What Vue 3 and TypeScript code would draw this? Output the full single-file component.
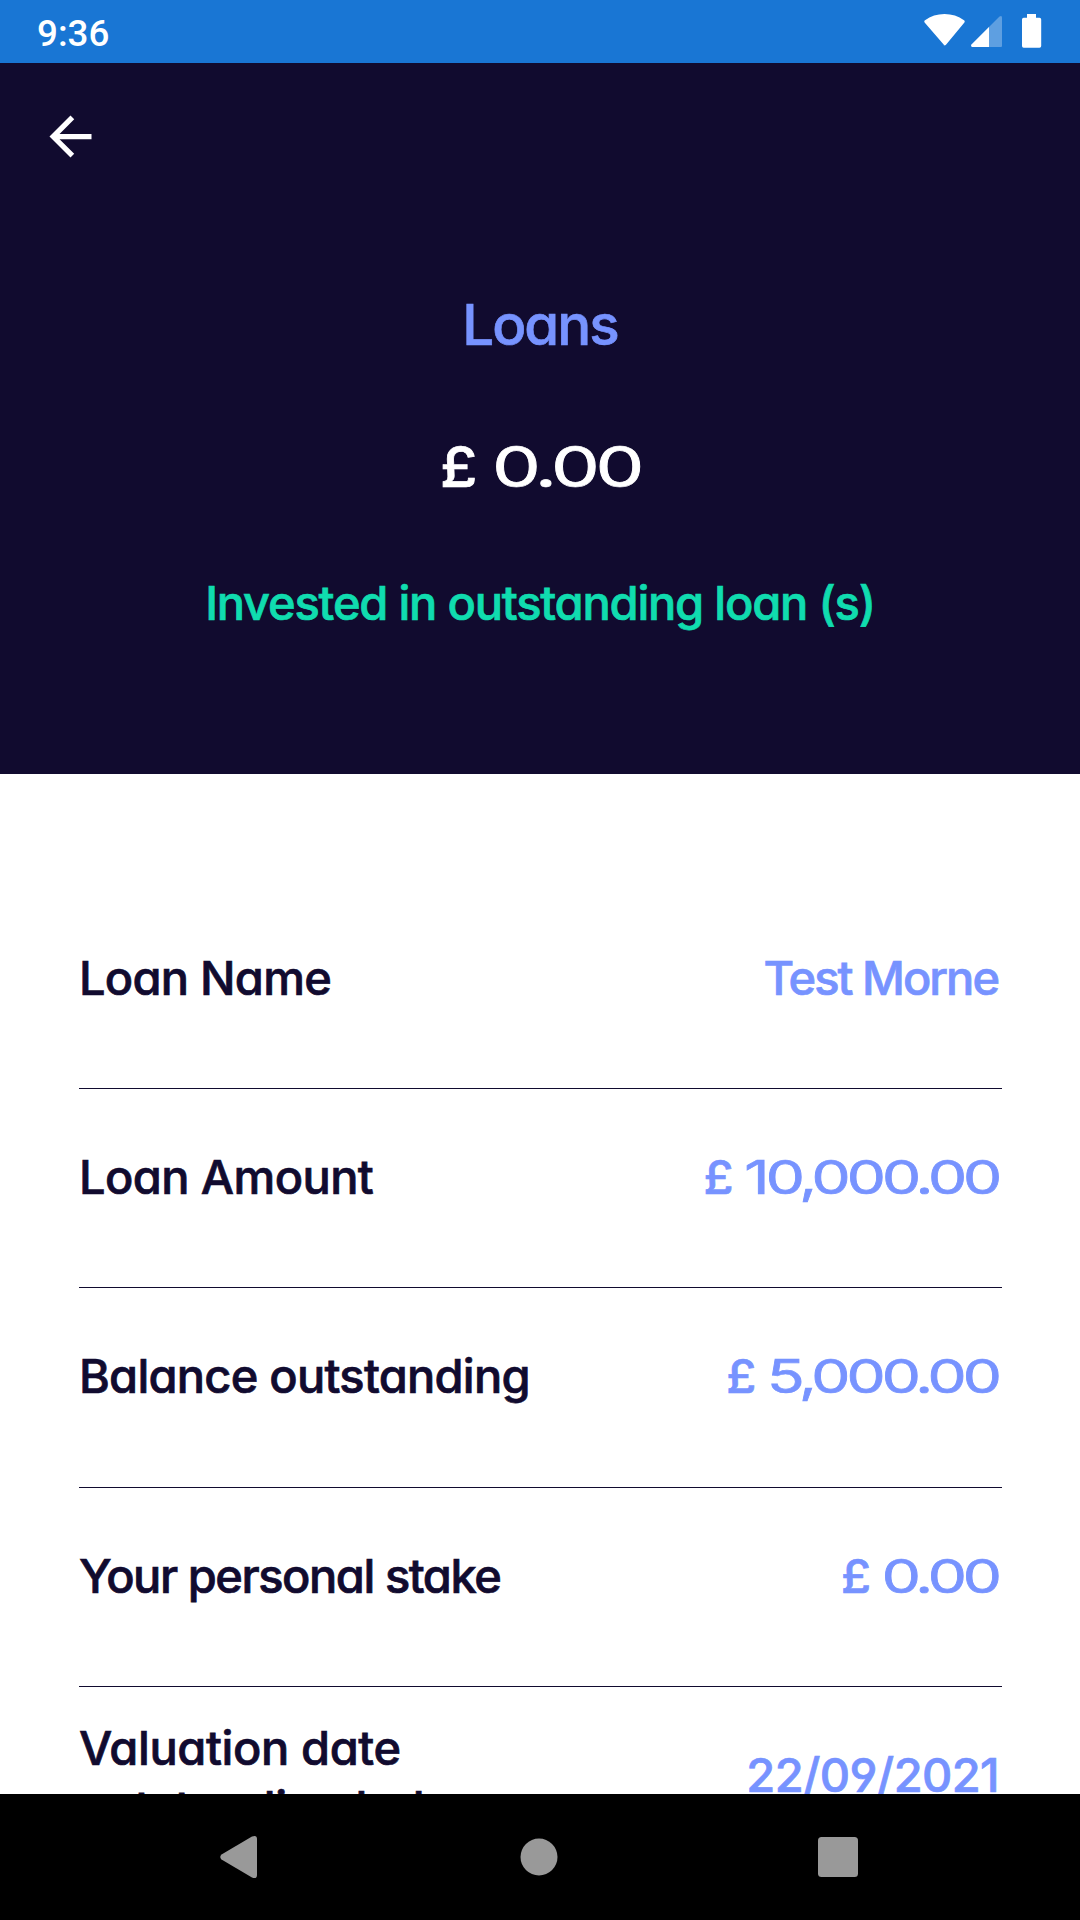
<script setup lang="ts">
interface LoanRow {
  label: string
  value: string
  labelSpacing: number
  kind: 'text' | 'money' | 'date'
}

const rows: LoanRow[] = [
  { label: 'Loan Name', value: 'Test Morne', labelSpacing: -0.75, kind: 'text' },
  { label: 'Loan Amount', value: '10,000.00', labelSpacing: -0.6, kind: 'money' },
  { label: 'Balance outstanding', value: '5,000.00', labelSpacing: -0.75, kind: 'money' },
  { label: 'Your personal stake', value: '0.00', labelSpacing: -1.45, kind: 'money' },
  { label: 'Valuation date outstanding balance', value: '22/09/2021', labelSpacing: -0.4, kind: 'date' },
]
</script>

<template>
  <div class="screen">
    <div class="status-bar">
      <span class="clock">9:36</span>
      <svg class="status-icons" width="118" height="36" viewBox="0 0 118 36">
        <path d="M20.5 33.6 L0.6 10.4 Q-.2 9.1 1 8.2 Q9.5 2 20.5 2 Q31.500 2 40 8.200 Q41.200 9.100 40.400 10.400 L22 32.700 Q20.500 34.300 19 32.700 Z" fill="#fff" />
        <path d="M47.500 35 Q46.500 33.500 47.500 32.500 L75.500 4.500 Q78 3 78 5.500 V34 Q78 35 77 35 Z" fill="#fff" opacity=".3" />
        <path d="M48 35 Q46.300 33.700 47.500 32.500 L65 15 V35 Z" fill="#fff" />
        <path d="M103 2 H112 V5.700 H115.500 Q117.200 5.700 117.200 7.400 V34 Q117.200 35.700 115.500 35.700 H99.700 Q98 35.700 98 34 V7.400 Q98 5.700 99.700 5.700 H103 Z" fill="#fff" />
      </svg>
    </div>

    <header class="hero">
      <button class="back" aria-label="Back">
        <svg width="63" height="63" viewBox="0 0 24 24">
          <path d="M20 11H7.83l5.59-5.59L12 4l-8 8 8 8 1.41-1.41L7.83 13H20v-2z" fill="#fff" />
        </svg>
      </button>
      <h1 class="title">Loans</h1>
      <div class="total"><span class="sign">£</span> 0.00</div>
      <div class="caption">Invested in outstanding loan (s)</div>
    </header>

    <main class="list">
      <div v-for="row in rows" :key="row.label" class="row">
        <div class="label" :style="{ letterSpacing: row.labelSpacing + 'px' }">{{ row.label }}</div>
        <div v-if="row.kind === 'money'" class="value money"><span class="sign">£</span> {{ row.value }}</div>
        <div v-else class="value" :class="row.kind">{{ row.value }}</div>
      </div>
    </main>

    <nav class="nav-bar">
      <svg width="38" height="44" viewBox="0 0 38 44">
        <path d="M1.500 19.500 L32 1.500 Q37 -.5 37 4 V40 Q37 44.500 32 42.500 L1.500 24.500 Q-1 22 1.500 19.500 Z" fill="#999" />
      </svg>
      <svg class="home" width="38" height="38" viewBox="0 0 38 38"><circle cx="19" cy="19" r="18.500" fill="#999" /></svg>
      <svg width="40" height="40" viewBox="0 0 40 40"><rect width="40" height="40" rx="3.500" fill="#999" /></svg>
    </nav>
  </div>
</template>

<style>
body {
  margin: 0;
}
</style>

<style scoped>
.screen {
  display: flex;
  flex-direction: column;
  width: 1080px;
  height: 1920px;
  overflow: hidden;
  background: #fff;
  color: #110b2f;
  font-family: Inter, "Liberation Sans", sans-serif;
  font-feature-settings: "cv11", "ss01";
  font-size: 47px;
  font-weight: 500;
  line-height: 60px;
  -webkit-text-stroke: 0.7px currentColor;
}
.status-bar {
  display: flex;
  justify-content: space-between;
  align-items: flex-start;
  flex: none;
  box-sizing: border-box;
  height: 63px;
  padding: 12px 38px 0 37px;
  background: #1976d4;
}
.clock {
  margin-top: 2px;
  font-family: Roboto, sans-serif;
  font-size: 36.75px;
  font-weight: 500;
  line-height: 40px;
  color: #fff;
  -webkit-text-stroke: 0;
}
.hero {
  display: flex;
  flex-direction: column;
  align-items: center;
  flex: none;
  box-sizing: border-box;
  height: 711px;
  padding-top: 41.5px;
  background: #110b2f;
}
.back {
  align-self: flex-start;
  margin: 0 0 127.5px 39px;
  padding: 0;
  border: 0;
  background: none;
  line-height: 0;
}
.title {
  margin: 0;
  font-size: 56.5px;
  font-weight: 500;
  letter-spacing: -2px;
  color: #7793ff;
}
.total {
  margin-top: 82px;
  font-size: 56.5px;
  font-weight: 400;
  letter-spacing: -3px;
  word-spacing: -7px;
  transform: scaleX(1.37);
  color: #fff;
}
.sign {
  display: inline-block;
  font-weight: 500;
  transform: scaleX(0.78);
  transform-origin: left center;
}
.caption {
  margin-top: 76px;
  letter-spacing: -1.2px;
  color: #10dcaf;
}
.list {
  flex: 1;
  min-height: 0;
  overflow: hidden;
  padding: 115.67px 78px 0 79px;
}
.row {
  display: flex;
  justify-content: space-between;
  align-items: center;
  box-sizing: border-box;
  height: 199.33px;
  padding-bottom: 22px;
  border-bottom: 1px solid #110b2f;
}
.row:last-child .label {
  padding-top: 5px;
}
.label {
  width: 470px;
}
.value {
  padding-right: 3px;
  color: #7793ff;
  white-space: nowrap;
  transform-origin: right center;
}
.value.text {
  padding-right: 4px;
  letter-spacing: -2px;
}
.value.money {
  font-weight: 400;
  letter-spacing: -3px;
  word-spacing: -5.5px;
  transform: scaleX(1.32);
}
.value.date {
  letter-spacing: -0.6px;
}
.nav-bar {
  display: flex;
  justify-content: space-between;
  align-items: center;
  flex: none;
  box-sizing: border-box;
  height: 126px;
  padding: 0 222px 0 220px;
  background: #000;
}
.home {
  margin-left: 2px;
}
</style>
